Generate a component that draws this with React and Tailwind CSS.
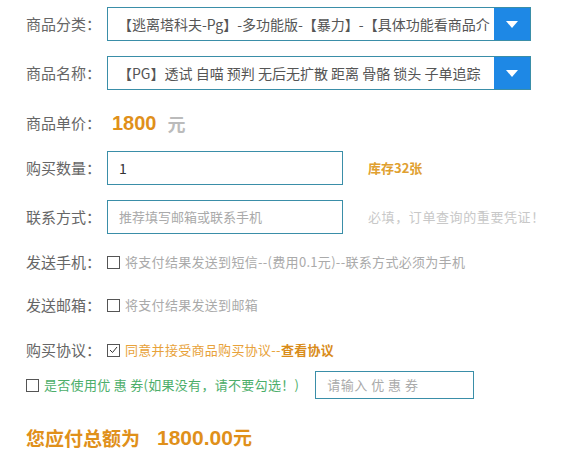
import React from "react";

const font = { fontFamily: '"Microsoft YaHei", "Noto Sans CJK SC", sans-serif' };
const num = { fontFamily: '"Liberation Sans", Arial, sans-serif' };

function Label({ children }) {
    return <div className="w-[81px] shrink-0 text-[15px] text-[#666]">{children}</div>;
}

function SelectBox({ text }) {
    return (
        <div className="flex h-[34px] w-[424px] border border-[#3a8ea8]">
            <div className="flex-1 overflow-hidden whitespace-nowrap pl-[10px] text-[14px] leading-[32px] text-[#555]">{text}</div>
            <div className="flex w-[36px] items-center justify-center bg-[#1e88e5]">
                <svg width="12" height="7" viewBox="0 0 12 7"><path d="M0 0h12L6 7z" fill="#fff" /></svg>
            </div>
        </div>
    );
}

function Check({ checked }) {
    return (
        <div className="flex h-[13px] w-[13px] shrink-0 items-center justify-center border border-[#555] bg-white">
            {checked && (
                <svg width="9" height="8" viewBox="0 0 9 8"><path d="M1 4l2.5 2.5L8 1" fill="none" stroke="#333" strokeWidth="1" /></svg>
            )}
        </div>
    );
}

export default function App() {
    return (
        <div className="w-[582px] h-[457px] bg-white pl-[26px] pt-[7px]" style={font}>
            <div className="flex items-center">
                <Label>商品分类：</Label>
                <SelectBox text="【逃离塔科夫-Pg】-多功能版-【暴力】-【具体功能看商品介" />
            </div>
            <div className="mt-[15px] flex items-center">
                <Label>商品名称：</Label>
                <SelectBox text="【PG】透试 自喵 预判 无后无扩散 距离 骨骼 锁头 子单追踪" />
            </div>
            <div className="mt-[18px] flex h-[30px] items-center">
                <Label>商品单价：</Label>
                <span className="ml-[5px] text-[20px] font-bold text-[#e0901a]" style={num}>1800</span>
                <span className="ml-[11px] text-[18px] font-bold text-[#bbb]">元</span>
            </div>
            <div className="mt-[13px] flex items-center">
                <Label>购买数量：</Label>
                <div className="h-[34px] w-[236px] border border-[#3a8ea8] pl-[11px] text-[14px] leading-[32px] text-[#333]">1</div>
                <span className="ml-[25px] text-[13px] font-bold text-[#e0a030]">库存32张</span>
            </div>
            <div className="mt-[15px] flex items-center">
                <Label>联系方式：</Label>
                <div className="h-[34px] w-[236px] border border-[#3a8ea8] pl-[11px] text-[13px] leading-[32px] text-[#aaa]">推荐填写邮箱或联系手机</div>
                <span className="ml-[25px] text-[13px] tracking-[0.6px] text-[#c8c8c8]">必填，订单查询的重要凭证！</span>
            </div>
            <div className="mt-[15px] flex h-[26px] items-center">
                <Label>发送手机：</Label>
                <Check />
                <span className="ml-[5px] text-[13px] tracking-[0.3px] text-[#aaa]">将支付结果发送到短信--(费用0.1元)--联系方式必须为手机</span>
            </div>
            <div className="mt-[17px] flex h-[26px] items-center">
                <Label>发送邮箱：</Label>
                <Check />
                <span className="ml-[5px] text-[13px] tracking-[0.3px] text-[#aaa]">将支付结果发送到邮箱</span>
            </div>
            <div className="mt-[19px] flex h-[26px] items-center">
                <Label>购买协议：</Label>
                <Check checked />
                <span className="ml-[5px] text-[13px] tracking-[0.3px] text-[#e8a23a]">同意并接受商品购买协议--<b className="text-[#d98c1a]">查看协议</b></span>
            </div>
            <div className="mt-[8px] flex items-center">
                <Check />
                <span className="ml-[5px] text-[13px] tracking-[0.3px] text-[#4cae6a]">是否使用优 惠 券(如果没有，请不要勾选！)</span>
                <div className="ml-[16px] h-[28px] w-[159px] border border-[#3a8ea8] pl-[11px] text-[13px] leading-[26px] tracking-[0.5px] text-[#aaa]">请输入 优 惠 券</div>
            </div>
            <div className="mt-[23px] flex items-center text-[19px] font-bold text-[#e0901a]">
                <span>您应付总额为</span>
                <span className="ml-[17px]"><span className="text-[21px]" style={num}>1800.00</span>元</span>
            </div>
        </div>
    );
}
